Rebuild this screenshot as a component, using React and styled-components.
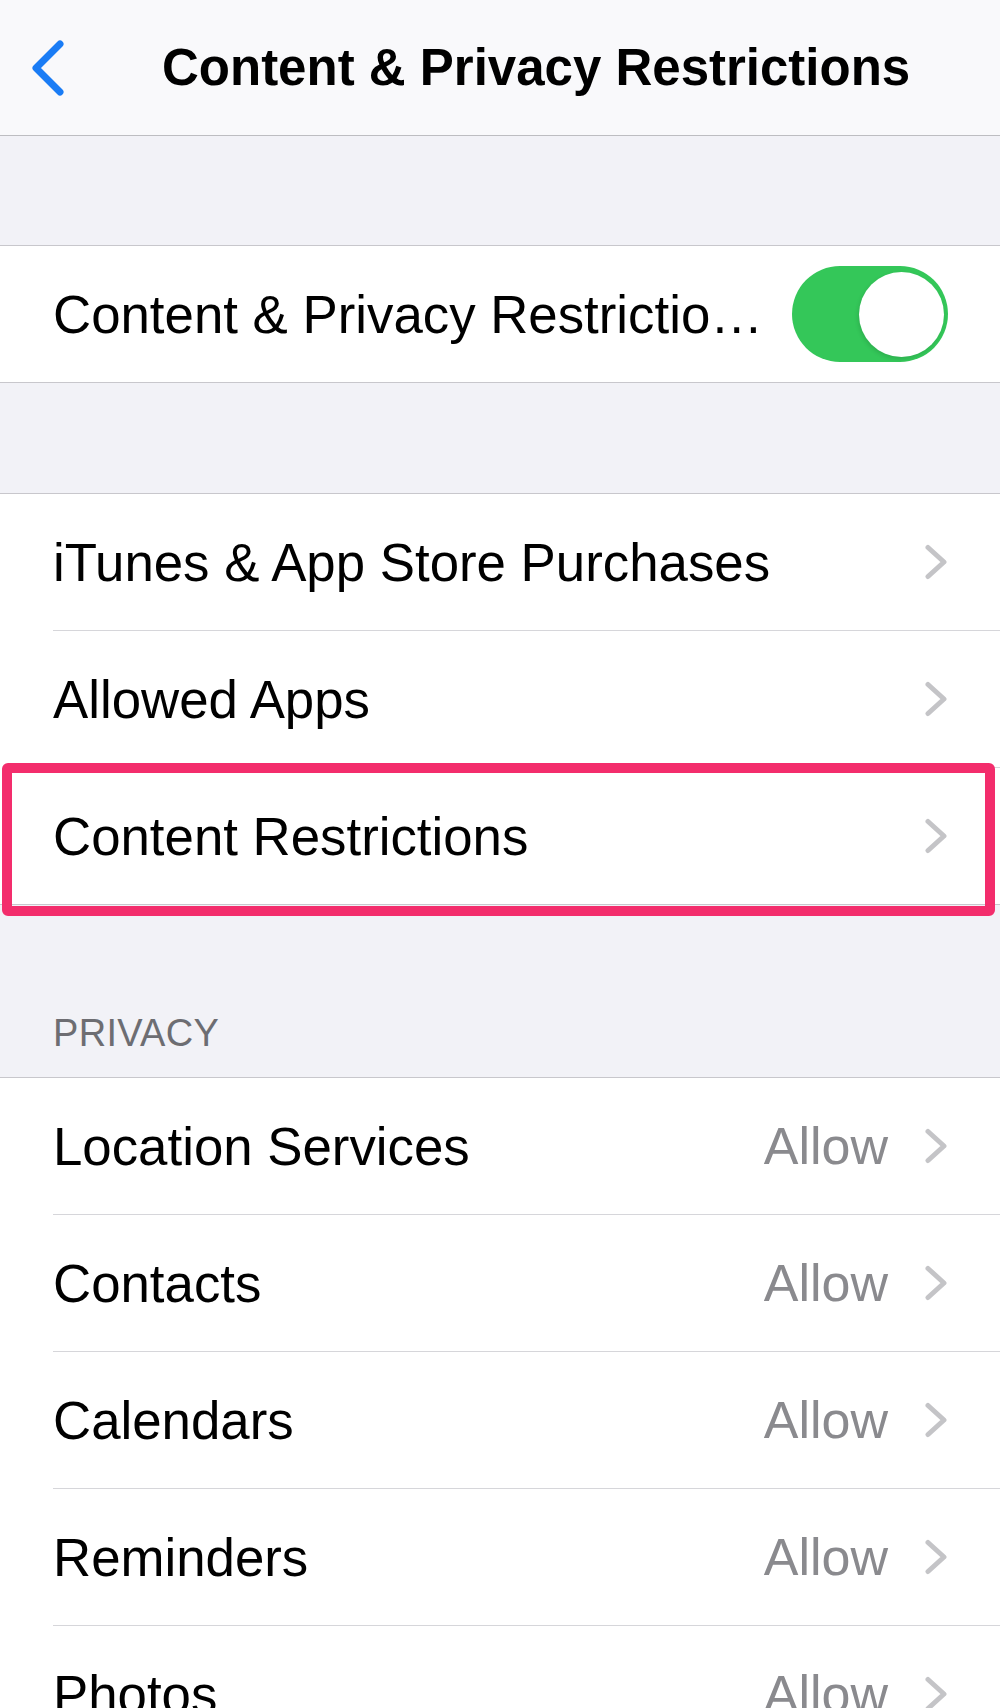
import React from 'react'
import styled, { createGlobalStyle } from 'styled-components'

const GlobalStyle = createGlobalStyle`
    body {
        margin: 0;
        background: #f2f2f7;
        font-family: "Liberation Sans", Arial, sans-serif;
        -webkit-font-smoothing: antialiased;
    }
`

const Screen = styled.div`
    width: 1000px;
    height: 1708px;
    overflow: hidden;
    background: #f2f2f7;
`

const NavBar = styled.div`
    height: 136px;
    box-sizing: border-box;
    display: flex;
    align-items: center;
    gap: 96px;
    padding-left: 30px;
    background: #f9f9fb;
    border-bottom: 1px solid #bdbdc1;
`

const NavTitle = styled.h1`
    margin: 0;
    font-size: 51px;
    font-weight: bold;
    color: #000;
    white-space: nowrap;
`

const Band = styled.div`
    height: ${props => props.h}px;
    display: flex;
    flex-direction: column;
    justify-content: flex-end;
    padding: 0 0 25px 53px;
    box-sizing: border-box;
`

const BandLabel = styled.div`
    font-size: 38px;
    line-height: 38px;
    color: #6d6d72;
    letter-spacing: 0.3px;
`

const Section = styled.div`
    background: #fff;
    border-top: 1px solid #c8c7cc;
    border-bottom: 1px solid #c8c7cc;
`

const Row = styled.div`
    position: relative;
    padding-left: 53px;
`

const RowInner = styled.div`
    height: 136px;
    display: flex;
    align-items: center;
    padding-right: 52px;
    border-bottom: ${props => props.last ? 'none' : '1px solid #d6d6da'};
`

const Label = styled.span`
    flex: 1;
    font-size: 52.8px;
    color: #000;
    white-space: nowrap;
    overflow: hidden;
`

const Value = styled.span`
    font-size: 52px;
    color: #8a8a8e;
    margin-right: 37px;
`

const Highlight = styled.div`
    position: absolute;
    left: 2px;
    right: 5px;
    top: -5px;
    bottom: -12px;
    border: 10px solid #f32d6c;
    border-radius: 6px;
    pointer-events: none;
`

const Toggle = styled.div`
    width: 156px;
    height: 96px;
    box-sizing: border-box;
    border-radius: 48px;
    background: #34c759;
    display: flex;
    align-items: center;
    justify-content: flex-end;
    padding-right: 4px;
`

const Knob = styled.div`
    width: 85px;
    height: 85px;
    border-radius: 50%;
    background: #fff;
    box-shadow: -1px 2px 4px rgba(0,0,0,0.12);
`

function BackChevron(){
    return (
        <svg width="36" height="58" viewBox="0 0 36 58">
            <path d="M30 5 L6 29 L30 53" fill="none" stroke="#1a7cf5" strokeWidth="7" strokeLinecap="round" strokeLinejoin="round"/>
        </svg>
    )
}

function Chevron(){
    return (
        <svg width="23" height="36" viewBox="0 0 23 36">
            <path d="M3 3.5 L19 18 L3 32.5" fill="none" stroke="#c4c4c7" strokeWidth="5" strokeLinecap="round" strokeLinejoin="round"/>
        </svg>
    )
}

const mainItems = ["iTunes & App Store Purchases", "Allowed Apps", "Content Restrictions"]
const privacyItems = ["Location Services", "Contacts", "Calendars", "Reminders", "Photos"]

export default function App(){
    return (
        <Screen>
            <GlobalStyle />
            <NavBar>
                <BackChevron />
                <NavTitle>Content &amp; Privacy Restrictions</NavTitle>
            </NavBar>

            <Band h={109} />
            <Section>
                <Row>
                    <RowInner last>
                        <Label>Content &amp; Privacy Restrictio…</Label>
                        <Toggle><Knob /></Toggle>
                    </RowInner>
                </Row>
            </Section>

            <Band h={110} />
            <Section>
                {mainItems.map((item, index) => (
                    <Row key={item}>
                        <RowInner last={index === mainItems.length - 1}>
                            <Label>{item}</Label>
                            <Chevron />
                        </RowInner>
                        {item === "Content Restrictions" && <Highlight />}
                    </Row>
                ))}
            </Section>

            <Band h={172}>
                <BandLabel>PRIVACY</BandLabel>
            </Band>
            <Section>
                {privacyItems.map((item, index) => (
                    <Row key={item}>
                        <RowInner last={index === privacyItems.length - 1}>
                            <Label>{item}</Label>
                            <Value>Allow</Value>
                            <Chevron />
                        </RowInner>
                    </Row>
                ))}
            </Section>
        </Screen>
    )
}
